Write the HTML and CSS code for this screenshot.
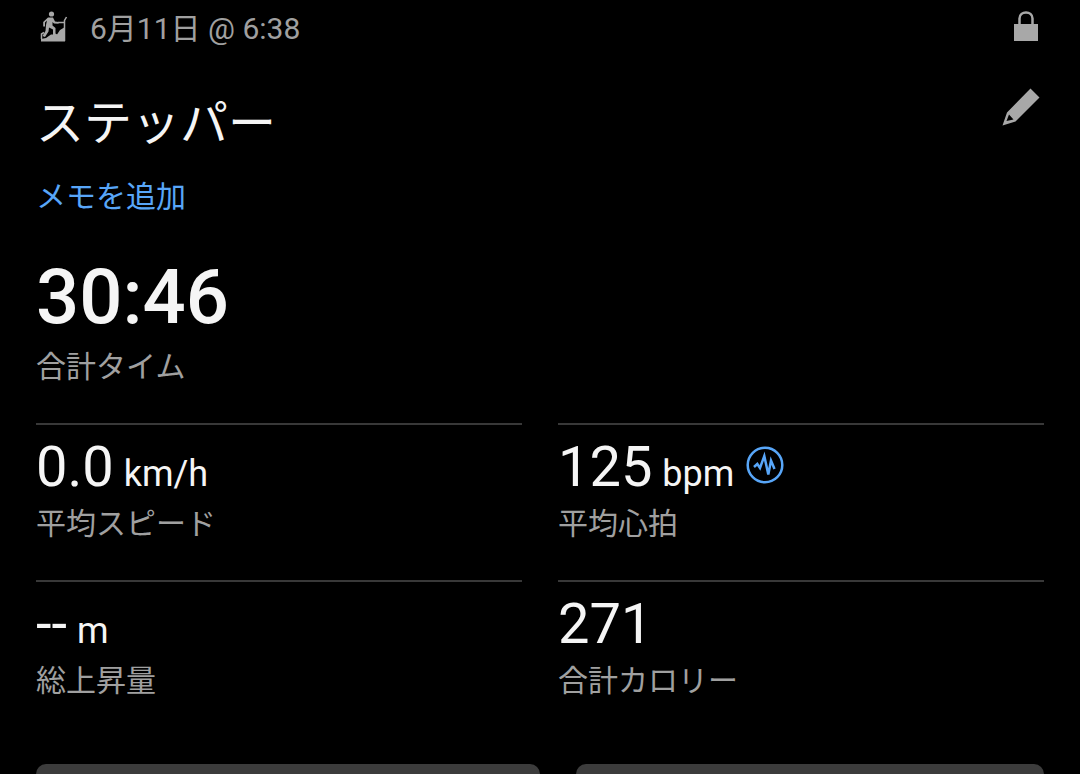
FILE: index.html
```html
<!DOCTYPE html>
<html lang="ja">
<head>
<meta charset="utf-8">
<meta name="viewport" content="width=device-width, initial-scale=1">
<title>ステッパー</title>
<link rel="stylesheet" href="styles.css">
</head>
<body>
<main class="activity">
  <header class="meta">
    <svg class="meta-icon" viewBox="0 0 28 32" aria-hidden="true">
      <circle cx="11.500" cy="3" r="2.600"/>
      <path d="M8 6.500L13 6.500L15 10.500L18.500 11V12.800L14 12.500L12.500 11V14.500L15.500 17V22.500L17.500 24H13V18.500L9 16.500L8.500 20.500L5 26L2.500 25L5.500 20L6 14L7 9.500L5 11.500V15.500H3.200V11Z"/>
      <path d="M1 30.500V28L6 27L11 23.500H17L20 19L25 16V30.500Z"/>
      <path class="rail" d="M1.500 28V23L4 21.500M18 11.500H24M26.500 6L24.500 9.500V30"/>
    </svg>
    <time class="date">6月11日 @ 6:38</time>
    <svg class="lock" viewBox="0 0 24 30" role="img" aria-label="非公開">
      <path d="M0 13H24V30H0Z"/>
      <path class="shackle" d="M5.500 14V7.500C5.500 -0.500 18.500 -0.500 18.500 7.500V14"/>
    </svg>
  </header>

  <div class="title-row">
    <h1 class="title">ステッパー</h1>
    <button class="edit" type="button" aria-label="編集">
      <svg class="pencil" viewBox="0 0 38 38" aria-hidden="true">
        <path fill-rule="evenodd" d="M28.500 0.500L37.500 9.500L13.500 33.500L0.500 37.500L5 24.500ZM7 26.500L4.500 33L11.500 31.500Z"/>
      </svg>
    </button>
  </div>
  <a class="note" href="#note">メモを追加</a>

  <section class="total">
    <div class="total-value">30:46</div>
    <div class="label">合計タイム</div>
  </section>

  <section class="stats">
    <div class="stat">
      <div class="value">0.0<span class="unit"> km/h</span></div>
      <div class="label">平均スピード</div>
    </div>
    <div class="stat">
      <div class="value-row">
        <div class="value">125<span class="unit"> bpm</span></div>
        <button class="pulse" type="button" aria-label="心拍の詳細">
          <svg class="pulse-icon" viewBox="0 0 38 38" aria-hidden="true">
            <circle cx="19" cy="19" r="17.300"/>
            <path d="M8 21L11.300 18L14 22L18.300 10L22.300 28.500L25 14.500L28.500 23"/>
          </svg>
        </button>
      </div>
      <div class="label">平均心拍</div>
    </div>
    <div class="stat">
      <div class="value">--<span class="unit"> m</span></div>
      <div class="label">総上昇量</div>
    </div>
    <div class="stat">
      <div class="value">271</div>
      <div class="label">合計カロリー</div>
    </div>
  </section>

  <section class="cards">
    <div class="card card-wide"></div>
    <div class="card"></div>
  </section>
</main>
</body>
</html>
```

FILE: styles.css
```css
* {
  box-sizing: border-box;
}

html {
  background: #000;
}

body {
  margin: 0;
  background: #000;
  color: #f5f5f5;
  font-family: Roboto, "Noto Sans CJK JP", sans-serif;
  font-size: 30px;
  line-height: 36px;
}

button {
  display: block;
  padding: 0;
  border: 0;
  background: none;
}

svg {
  display: block;
}

.activity {
  display: flex;
  flex-direction: column;
  min-height: 100vh;
  padding: 11px 36px 0;
}

.meta {
  display: flex;
  align-items: flex-start;
  color: #a0a0a0;
}

.meta-icon {
  width: 28px;
  height: 32px;
  margin: 0 22px 0 4px;
  fill: #a8a8a8;
}

.rail {
  fill: none;
  stroke: #a8a8a8;
  stroke-width: 1.500;
}

.date {
  flex: 1;
}

.lock {
  width: 24px;
  height: 30px;
  margin-right: 6px;
  fill: #a8a8a8;
}

.shackle {
  fill: none;
  stroke: #a8a8a8;
  stroke-width: 2.500;
}

.title-row {
  display: flex;
  align-items: flex-start;
  justify-content: space-between;
  margin-top: 41px;
}

.title {
  margin: 0;
  font-size: 48px;
  font-weight: 400;
  line-height: 72px;
}

.edit {
  margin-right: 4px;
}

.pencil {
  width: 38px;
  height: 38px;
  fill: #a8a8a8;
}

.note {
  display: block;
  width: fit-content;
  margin-top: 19px;
  color: #58a6f8;
  text-decoration: none;
}

.total {
  margin-top: 40px;
}

.total-value {
  font-size: 76px;
  font-weight: 500;
  line-height: 84px;
}

.label {
  margin-top: 7px;
  color: #a0a0a0;
}

.total .label {
  margin-top: 10px;
}

.stats {
  display: grid;
  grid-template-columns: 1fr 1fr;
  column-gap: 36px;
  margin-top: 38px;
}

.stat {
  padding: 10px 0 38px;
  border-top: 2px solid #383838;
}

.value {
  font-size: 56px;
  line-height: 64px;
}

.unit {
  margin-left: 1px;
  font-size: 36px;
  line-height: 1;
  white-space: pre;
}

.value-row {
  display: flex;
  align-items: flex-start;
  gap: 12px;
}

.pulse {
  margin-top: 11px;
}

.pulse-icon {
  width: 38px;
  height: 38px;
  fill: none;
  stroke: #58a6f8;
  stroke-width: 2.500;
}

.cards {
  display: flex;
  flex: 1;
  gap: 36px;
  margin-top: 27px;
}

.card {
  flex: 13;
  border-radius: 10px 10px 0 0;
  background: #3c3c3c;
}

.card-wide {
  flex: 14;
}
```
